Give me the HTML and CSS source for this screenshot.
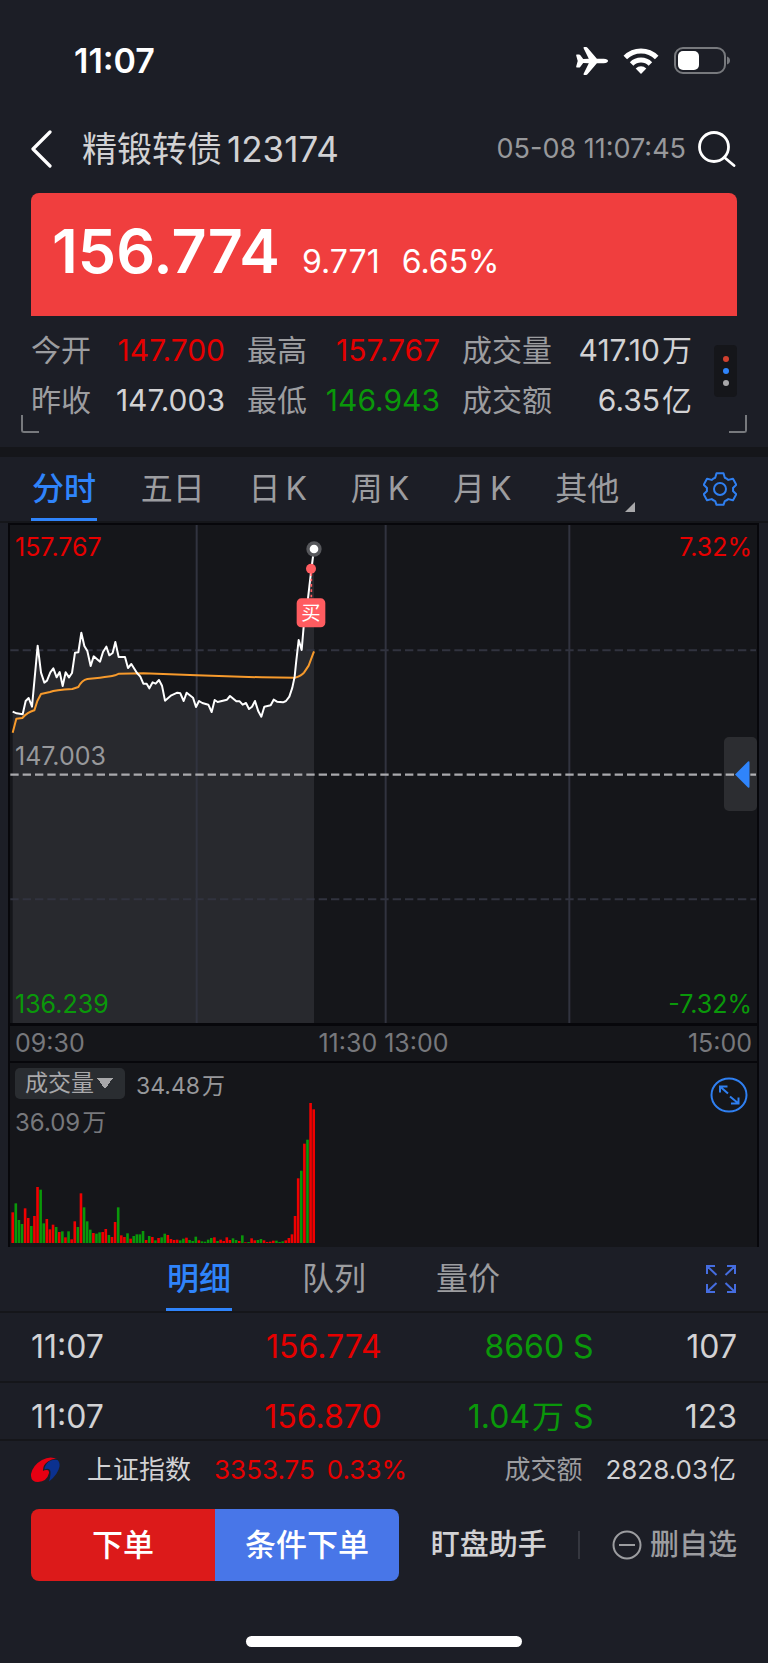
FILE: index.html
```html
<!DOCTYPE html>
<html lang="zh-CN">
<head>
<meta charset="utf-8">
<meta name="viewport" content="width=device-width, initial-scale=1">
<title>精锻转债 123174</title>
<link rel="stylesheet" href="styles.css">
</head>
<body>
<div class="status">
  <span class="status-time">11:07</span>
  <div class="status-icons">
    <svg width="32" height="28" viewBox="0 0 32 28" fill="#fff" aria-hidden="true"><path d="M0.8 7.5h2.2q.8 0 1.2.6L7.2 12l5.6-.2L7.6 1.2Q7.200 0 8.300 0h1.700q1 0 1.700.9l9.200 10.800 6.800.1q4.300.3 4.300 2.200t-4.300 2.200l-6.800.1-9.200 10.800q-.7.9-1.700.9H8.300q-1.100 0-.7-1.200l5.200-10.600L7.200 16l-3 3.900q-.4.600-1.200.6H.8q-.8 0-.6-1L1.700 14 .2 8.500q-.2-1 .6-1z"/></svg>
    <svg width="36" height="26" viewBox="0 0 36 26" aria-hidden="true"><g fill="none" stroke="#fff" stroke-width="5"><path d="M2.300 9.600a22.200 22.200 0 0 1 31.400 0"/><path d="M8.600 15.900a13.300 13.300 0 0 1 18.800 0"/></g><path d="M18 26l-5.300-5.600a7.600 7.600 0 0 1 10.600 0z" fill="#fff"/></svg>
    <svg width="56" height="28" viewBox="0 0 56 28" aria-hidden="true"><rect x="1" y="1" width="50" height="25" rx="8" fill="none" stroke="#77797d" stroke-width="2"/><rect x="4" y="4" width="21" height="19" rx="5" fill="#fff"/><path d="M53 9.500q3 1.200 3 4t-3 4z" fill="#77797d"/></svg>
  </div>
</div>

<header class="header">
  <button class="icon-btn back" aria-label="返回"><svg width="22" height="38" viewBox="0 0 22 38" fill="none" stroke="#fff" stroke-width="3.200" stroke-linecap="round" stroke-linejoin="round"><path d="M19 2L2 19l17 17"/></svg></button>
  <h1 class="title"><span>精锻转债</span><span>123174</span></h1>
  <time class="date">05-08 11:07:45</time>
  <button class="icon-btn" aria-label="搜索"><svg width="38" height="36" viewBox="0 0 38 36" fill="none" stroke="#fff" stroke-width="2.800" stroke-linecap="round"><circle cx="16" cy="16" r="14.500"/><path d="M26.500 26.500L36 34.500"/></svg></button>
</header>

<section class="quote">
  <div class="banner">
    <strong class="price">156.774</strong>
    <span>9.771</span>
    <span>6.65%</span>
  </div>
  <div class="stats-wrap">
    <dl class="stats">
      <dt>今开</dt><dd class="up">147.700</dd>
      <dt>最高</dt><dd class="up">157.767</dd>
      <dt>成交量</dt><dd>417.10<span class="unit">万</span></dd>
      <dt>昨收</dt><dd>147.003</dd>
      <dt>最低</dt><dd class="down">146.943</dd>
      <dt>成交额</dt><dd>6.35<span class="unit">亿</span></dd>
    </dl>
    <button class="more" aria-label="更多"><i class="dot dot-red"></i><i class="dot dot-blue"></i><i class="dot dot-gray"></i></button>
  </div>
  <i class="corner corner-left"></i>
  <i class="corner corner-right"></i>
</section>

<nav class="tabs period-tabs">
  <button class="tab active">分时</button>
  <button class="tab">五日</button>
  <button class="tab">日<span class="latin">K</span></button>
  <button class="tab">周<span class="latin">K</span></button>
  <button class="tab">月<span class="latin">K</span></button>
  <button class="tab tab-other">其他</button>
  <button class="icon-btn gear" aria-label="设置"><svg width="34" height="34" viewBox="0 0 34 34" fill="none" stroke="#2f7ff0" stroke-width="2" stroke-linejoin="round"><path d="M13.500 1.200h7l1.300 4.600q1.900.7 3.500 2.100l4.700-1.200 3.300 6-3.300 3.300q.2 1.500 0 3l3.300 3.300-3.300 6-4.700-1.200q-1.600 1.300-3.500 2l-1.300 3.700h-7l-1.300-3.700q-1.900-.7-3.500-2L4 28.300l-3.300-6L4 19q-.2-1.500 0-3L.7 12.700l3.300-6 4.700 1.200q1.600-1.400 3.500-2.100z"/><circle cx="17" cy="17" r="6"/></svg></button>
</nav>

<main class="panel">
  <section class="chart">
    <svg class="plot" viewBox="0 0 747 498" preserveAspectRatio="none" role="img" aria-label="分时走势">
      <g transform="translate(-10 -5) scale(.33333)">
        <path fill="#28292e" d="M38 1510V577L68 583 77 543 86 534 96 560 113 377 123 458 133 488 141 482 151 457 160 445 170 472 179 456 188 498 197 457 207 472 216 459 225 398 235 397 244 338 253 378 262 393 272 438 281 409 300 425 309 396 319 380 328 406 338 399 346 366 356 411 375 411 384 444 394 432 411 459 421 470 430 491 440 491 448 505 458 487 467 491 477 480 486 497 495 542 514 526 532 518 541 520 551 543 560 518 579 533 588 561 597 543 607 549 625 554 635 576 644 540 653 546 681 539 690 528 709 544 719 544 728 554 738 549 747 567 756 560 765 543 775 574 784 590 793 560 812 556 821 539 831 545 849 547 858 543 868 530 877 503 884 470 888 430 896 360 905 390 911 320 924 235 928 200 935 140 942 88V1510z"/>
        <g stroke="#31333f" stroke-width="6"><path d="M590 15V1510M1157 15V1510M1708 15V1510"/><path stroke-dasharray="25 12" d="M31 391H2268M31 1138H2268"/></g>
        <path stroke="#a9a9ad" stroke-width="7" stroke-dasharray="25 12" d="M31 764H2268"/>
        <g fill="none" stroke-linejoin="round">
          <path stroke="#f79a2c" stroke-width="6" d="M38 638L49 596 67 594Q82 577 103 571L112 543 123 522 150 516Q165 510 217 507L235 501Q246 480 262 477L300 473Q330 470 345 466L357 461 430 460 590 466 785 472 886 473Q905 467 912 458L926 437 942 394"/>
          <path stroke="#fff" stroke-width="6" d="M38 575L50 580 68 583 77 543 86 534 96 560 113 377 123 458 133 488 141 482 151 457 160 445 170 472 179 456 188 498 197 457 207 472 216 459 225 398 235 397 244 338 253 378 262 393 272 438 281 409 300 425 309 396 319 380 328 406 338 399 346 366 356 411 375 411 384 444 394 432 411 459 421 470 430 491 440 491 448 505 458 487 467 491 477 480 486 497 495 542 514 526 532 518 541 520 551 543 560 518 579 533 588 561 597 543 607 549 625 554 635 576 644 540 653 546 681 539 690 528 709 544 719 544 728 554 738 549 747 567 756 560 765 543 775 574 784 590 793 560 812 556 821 539 831 545 849 547 858 543 868 530 877 503 884 470 888 430 896 360 905 390 911 320 924 235 928 200 935 140 942 88"/>
        </g>
        <path stroke="#ff5c60" stroke-width="5" stroke-dasharray="8 8" d="M934 160V235"/>
        <circle cx="942" cy="87" r="23" fill="#56575b"/><circle cx="942" cy="87" r="13" fill="#fff"/>
        <circle cx="933" cy="146" r="15" fill="#ff5c60"/>
        <rect x="890" y="235" width="86" height="87" rx="14" fill="#ff5c60"/>
        <text class="buy" x="933" y="300">买</text>
      </g>
    </svg>
    <span class="mark top left up">157.767</span>
    <span class="mark top right up">7.32%</span>
    <span class="mark middle left">147.003</span>
    <span class="mark bottom left down">136.239</span>
    <span class="mark bottom right down">-7.32%</span>
    <button class="drawer" aria-label="展开盘口"><svg width="15" height="27" viewBox="0 0 15 27" fill="#2f84fb"><path d="M0 13.500L13 .5q1.500-.8 1.500 1v24q0 1.800-1.500 1z"/></svg></button>
  </section>
  <div class="times"><span>09:30</span><span class="noon">11:30 13:00</span><span>15:00</span></div>
  <section class="volume">
    <svg class="bars" id="bars" viewBox="0 0 747 142" preserveAspectRatio="none" role="img" aria-label="成交量柱状图"></svg>
    <div class="volume-head">
      <select class="indicator" aria-label="指标"><option>成交量</option></select>
      <span class="volume-now">34.48<span class="unit">万</span></span>
      <button class="icon-btn expand" aria-label="放大"><svg width="38" height="36" viewBox="0 0 38 36" fill="none" stroke="#2f7ff0" stroke-width="2"><ellipse cx="19" cy="18" rx="17.500" ry="16.500"/><path d="M10 15.500V9.500h7.500M10 9.500l8 7M28.500 20.500v6h-7.500M28.500 26.500l-8.500-7"/></svg></button>
    </div>
    <div class="volume-max">36.09<span class="unit">万</span></div>
  </section>
</main>

<nav class="tabs detail-tabs">
  <button class="tab active">明细</button>
  <button class="tab">队列</button>
  <button class="tab">量价</button>
  <button class="icon-btn full" aria-label="全屏"><svg width="30" height="28" viewBox="0 0 30 28" fill="none" stroke="#456de0" stroke-width="2"><path d="M1 9V1h8M1 1l9.500 9M21 1h8v8M29 1l-9.500 9M1 19v8h8M1 27l9.500-9M21 27h8v-8M29 27l-9.500-9"/></svg></button>
</nav>

<div class="ticks-view">
  <table class="ticks">
    <tr><td>11:07</td><td class="up">156.774</td><td class="down">8660 S</td><td>107</td></tr>
    <tr><td>11:07</td><td class="up">156.870</td><td class="down">1.04<span class="unit">万</span> S</td><td>123</td></tr>
  </table>
</div>

<footer>
  <div class="index">
    <svg width="29" height="26" viewBox="0 0 29 26" aria-hidden="true"><path fill="#e60012" d="M26 2Q19-1.500 11 3 2 8 0 17q-.5 8 7 8 9-.5 11-9 .3-3-2-3-3 .2-4 1-.5-6 5-9.500Q22 1 26 2z"/><path fill="#0b318f" d="M26.500 3q-7-1-11 4-2 2.500-2 5.500Q17 11 19 13q1.500 3-1 11.500 9-7 10.500-15Q29 5 26.500 3z"/></svg>
    <span class="index-name">上证指数</span>
    <span class="index-value up">3353.75</span>
    <span class="index-change up">0.33%</span>
    <span class="turnover">成交额</span>
    <span class="turnover-value">2828.03<span class="unit">亿</span></span>
  </div>
  <div class="actions">
    <div class="orders"><button class="order">下单</button><button class="order order-cond">条件下单</button></div>
    <button class="link-btn helper">盯盘助手</button>
    <i class="rule"></i>
    <button class="link-btn remove"><svg width="30" height="30" viewBox="0 0 30 30" fill="none" stroke="#9c9da0" stroke-width="2"><circle cx="15" cy="15" r="13.500"/><path d="M7 15h16"/></svg>删自选</button>
  </div>
  <div class="home"></div>
</footer>
<script src="chart.js"></script>
</body>
</html>
```
FILE: styles.css
```css
* { box-sizing: border-box; }
body {
  margin: 0;
  background: #1c1e26;
  color: #d2d2d4;
  font-family: Inter, "Noto Sans CJK SC", sans-serif;
  line-height: 40px;
}
button {
  margin: 0;
  padding: 0;
  border: 0;
  background: none;
  color: inherit;
  font: inherit;
}
svg { display: block; flex: none; }
.up { color: #e60000; }
.down { color: #0a980a; }
.unit { margin-left: 2px; }
.latin { margin-left: 5px; }
.icon-btn { flex: none; }

.status {
  display: flex;
  align-items: center;
  justify-content: space-between;
  height: 122px;
  padding: 0 38px 0 74px;
  color: #fff;
  font-size: 34px;
  font-weight: 600;
}
.status-icons { display: flex; align-items: center; gap: 15px; }

.header {
  display: flex;
  align-items: center;
  height: 71px;
  padding: 0 32px 18px 31px;
}
.title {
  display: flex;
  gap: 5px;
  margin: 0 auto 0 29px;
  font-size: 35px;
  font-weight: 400;
}
.date { margin-right: 12px; color: #97989b; font-size: 27px; }

.quote { position: relative; padding: 0 31px; }
.banner {
  display: flex;
  align-items: baseline;
  gap: 22px;
  height: 123px;
  padding: 22px 21px 0;
  border-radius: 8px 8px 0 0;
  background: #f03e3e;
  color: #fff;
  font-size: 32px;
}
.price { font-size: 61px; font-weight: 600; line-height: 72px; }
.stats-wrap {
  display: flex;
  align-items: center;
  gap: 22px;
  height: 131px;
  padding-bottom: 22px;
}
.stats {
  display: grid;
  flex: 1;
  grid-template-columns: 62px minmax(0, 110fr) 62px minmax(0, 109fr) 93px minmax(0, 115fr);
  column-gap: 22px;
  margin: 8px 0 0;
  font-size: 30px;
  line-height: 50px;
  white-space: nowrap;
}
.stats dt { color: #9c9da0; }
.stats dd { display: flex; justify-content: flex-end; margin: 0; }
.more {
  display: flex;
  flex: none;
  flex-direction: column;
  align-items: center;
  justify-content: center;
  gap: 6px;
  width: 23px;
  height: 52px;
  border-radius: 4px;
  background: #15161a;
}
.dot { width: 6px; height: 6px; border-radius: 50%; }
.dot-red { background: #d0402f; }
.dot-blue { background: #2f84fb; }
.dot-gray { background: #a8a8aa; }
.corner {
  position: absolute;
  bottom: 14px;
  width: 18px;
  height: 18px;
  border-bottom: 2px solid #77797d;
}
.corner-left { left: 21px; border-left: 2px solid #77797d; border-radius: 0 0 0 3px; }
.corner-right { right: 21px; border-right: 2px solid #77797d; border-radius: 0 0 3px 0; }

.tabs {
  display: flex;
  align-items: stretch;
  color: #9c9da0;
  font-size: 32px;
}
.tab { padding-top: 2px; border-bottom: 3px solid transparent; white-space: nowrap; }
.tab.active { padding-right: 1px; padding-left: 1px; border-color: #2f84fb; color: #2f84fb; font-weight: 500; }
.period-tabs {
  justify-content: space-between;
  height: 76px;
  padding: 0 31px;
  border-top: 10px solid #15161a;
  border-bottom: 2px solid #15161a;
}
.tab-other { position: relative; }
.tab-other::after {
  content: "";
  position: absolute;
  right: -16px;
  bottom: 6px;
  border: 5px solid #a8a8aa;
  border-top-color: transparent;
  border-left-color: transparent;
}
.gear { margin-left: 40px; }

.panel {
  margin: 0 9px 0 8px;
  border: 2px solid #07070b;
  border-bottom: 0;
  background: #15161a;
}
.chart { position: relative; }
.plot { width: 100%; height: 498px; }
.buy { fill: #fff; font-size: 58px; text-anchor: middle; }
.mark { position: absolute; color: #97989b; font-size: 25px; line-height: 28px; }
.mark.up { color: #e60000; }
.mark.down { color: #0a980a; }
.top { top: 8px; }
.middle { top: 217px; }
.bottom { bottom: 5px; }
.left { left: 5px; }
.right { right: 5px; }
.drawer {
  position: absolute;
  top: 212px;
  right: 0;
  display: flex;
  align-items: center;
  justify-content: flex-end;
  width: 33px;
  height: 74px;
  padding-right: 7px;
  border-radius: 5px;
  background: #ffffff1a;
}
.times {
  display: grid;
  grid-template-columns: 1fr auto 1fr;
  height: 40px;
  padding: 0 5px;
  border-top: 3px solid #07070b;
  border-bottom: 2px solid #07070b;
  color: #77787c;
  font-size: 25px;
  line-height: 35px;
}
.times span:last-child { text-align: right; }
.volume {
  position: relative;
  height: 184px;
  padding: 5px;
  color: #77787c;
  font-size: 24px;
}
.bars { position: absolute; left: 0; bottom: 4px; width: 100%; height: 142px; }
.volume-head { position: relative; display: flex; height: 38px; }
.indicator {
  width: 110px;
  height: 31px;
  padding: 0 0 0 10px;
  border: 0;
  border-radius: 5px;
  appearance: none;
  background-color: #2a2d31;
  background-image: linear-gradient(to top right, transparent 50%, #a8a8aa 50%), linear-gradient(to top left, transparent 50%, #a8a8aa 50%);
  background-position: 82px 10px, 90px 10px;
  background-size: 8px 11px;
  background-repeat: no-repeat;
  color: #a8a8aa;
  font: inherit;
  font-size: 23px;
  line-height: 31px;
}
.volume-now { margin-left: 11px; color: #97989b; font-size: 23px; line-height: 36px; }
.expand { margin: 9px 4px 0 auto; align-self: flex-start; }
.volume-max { line-height: 34px; }

.detail-tabs {
  gap: 70px;
  height: 66px;
  padding: 0 32px 0 166px;
  border-bottom: 2px solid #15161a;
}
.full { margin-left: auto; }

.ticks-view { height: 128px; overflow: hidden; border-bottom: 2px solid #15161a; }
.ticks { width: 100%; border-collapse: collapse; table-layout: fixed; font-size: 32px; }
.ticks td { height: 69px; padding: 0; border-bottom: 2px solid #15161a; text-align: right; white-space: nowrap; }
.ticks td:first-child { width: 20%; padding-left: 31px; text-align: left; }
.ticks td:nth-child(2) { width: 228px; }
.ticks td:nth-child(3) { width: 212px; }
.ticks td:last-child { padding-right: 31px; }

.index {
  display: flex;
  align-items: center;
  height: 58px;
  padding: 0 32px 0 31px;
  font-size: 26px;
}
.index-name { margin: 0 23px 0 27px; }
.index-change { margin-left: 12px; }
.turnover { margin: 0 23px 0 auto; color: #9c9da0; }
.actions {
  display: flex;
  align-items: center;
  justify-content: space-between;
  margin-top: 10px;
  padding: 0 31px;
}
.orders {
  display: flex;
  flex: 0 1 368px;
  height: 72px;
  overflow: hidden;
  border-radius: 8px;
}
.order { flex: 1; background: #dc1a1a; color: #fff; font-size: 31px; font-weight: 500; }
.order-cond { background: #4876e8; }
.link-btn { font-size: 29px; font-weight: 500; }
.rule { width: 2px; height: 28px; background: #35373f; }
.remove { display: flex; align-items: center; gap: 8px; color: #9c9da0; }
.home {
  width: 36%;
  height: 11px;
  margin: 55px auto 16px;
  border-radius: 6px;
  background: #fff;
}
```
FILE: chart.js
```js
// One entry per minute from 09:30: positive = rising (red), negative = falling (green).
const volumes = [
  92, -119, -69, -57, 104, 75, -51, 81, 168, -160, -59, 72, 41, 55, -48, 33, -35, 17, -35, 11,
  65, -48, 149, -107, -65, -40, 30, -28, -32, 33, 42, -24, 18, 63, -107, 23, 18, -29, 13, -21,
  -26, -26, -36, 9, -21, 18, -8, 15, -17, -28, 24, 12, 9, 10, -8, -13, 16, -9, -6, -19,
  8, -5, -4, -10, -15, 17, -6, 10, 6, 17, 9, -14, -9, 6, -23, 2, -3, 14, 8, -9,
  -12, 8, 3, 4, 7, -7, -3, -5, 8, 15, 26, 81, 194, -217, 298, -310, 420, 401
];
const step = 3.103;
const baseline = 142;
const svg = document.getElementById("bars");
volumes.forEach((v, i) => {
  const rect = document.createElementNS("http://www.w3.org/2000/svg", "rect");
  const height = Math.abs(v) / 3;
  rect.setAttribute("x", (1.4 + i * step).toFixed(2));
  rect.setAttribute("y", (baseline - height).toFixed(2));
  rect.setAttribute("width", 2.6);
  rect.setAttribute("height", height.toFixed(2));
  rect.setAttribute("fill", v > 0 ? "#f00000" : "#0a980a");
  svg.appendChild(rect);
});
```
